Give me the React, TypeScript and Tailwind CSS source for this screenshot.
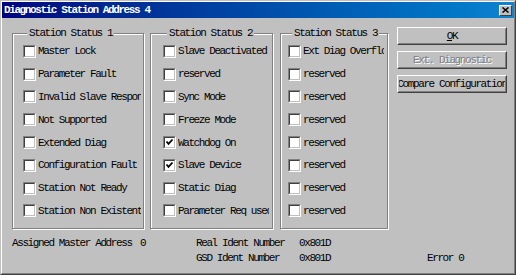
import React from 'react';

const font = "font-['Liberation_Mono',monospace] text-[11px] tracking-[-1.4px]";

const status1 = [
  'Master Lock',
  'Parameter Fault',
  'Invalid Slave Response',
  'Not Supported',
  'Extended Diag',
  'Configuration Fault',
  'Station Not Ready',
  'Station Non Existent',
];

const status2 = [
  'Slave Deactivated',
  'reserved',
  'Sync Mode',
  'Freeze Mode',
  'Watchdog On',
  'Slave Device',
  'Static Diag',
  'Parameter Req used',
];

const status3 = [
  'Ext Diag Overflow',
  'reserved',
  'reserved',
  'reserved',
  'reserved',
  'reserved',
  'reserved',
  'reserved',
];

const checked2 = ['Watchdog On', 'Slave Device'];

function CheckBox({ checked }: { checked?: boolean }) {
  return (
    <div className="w-[13px] h-[13px] shrink-0 border border-t-[#808080] border-l-[#808080] border-b-white border-r-white">
      <div className="w-full h-full bg-white border border-t-[#404040] border-l-[#404040] border-b-[#c0c0c0] border-r-[#c0c0c0]">
        {checked && (
          <svg width="9" height="9" viewBox="0 0 9 9" className="block">
            <path d="M1.5 3.5 L3.5 5.8 L7.5 1.5" stroke="#000" strokeWidth="1.8" fill="none" />
          </svg>
        )}
      </div>
    </div>
  );
}

function Group({
  title,
  items,
  checked = [],
  className,
}: {
  title: string;
  items: string[];
  checked?: string[];
  className: string;
}) {
  return (
    <fieldset
      className={`min-w-0 shrink-0 border border-[#808080] shadow-[inset_1px_1px_0_#fff,1px_1px_0_#fff] pb-[6px] ${className}`}
    >
      <legend className="ml-[4px] px-[2px] leading-[13px] bg-[#c0c0c0]">{title}</legend>
      <div className="flex flex-col">
        {items.map((label, i) => (
          <div key={i} className="flex items-center h-[22.8px]">
            <CheckBox checked={checked.includes(label)} />
            <span className="ml-[2px] flex-1 min-w-0 overflow-hidden whitespace-nowrap leading-[12px]">
              {label}
            </span>
          </div>
        ))}
      </div>
    </fieldset>
  );
}

function Button({ children, disabled }: { children: React.ReactNode; disabled?: boolean }) {
  return (
    <div className="w-[110px] h-[18px] border border-t-white border-l-white border-b-[#404040] border-r-[#404040]">
      <div
        className={`w-full h-full flex items-center justify-center overflow-hidden whitespace-nowrap border border-t-[#c0c0c0] border-l-[#c0c0c0] border-b-[#808080] border-r-[#808080] ${
          disabled ? 'text-[#808080] [text-shadow:1px_1px_0_#fff]' : 'text-black'
        }`}
      >
        {children}
      </div>
    </div>
  );
}

export default function App() {
  return (
    <div className={`w-[516px] h-[275px] bg-[#c0c0c0] text-black ${font}`}>
      <div className="w-full h-full border border-t-[#c0c0c0] border-l-[#c0c0c0] border-b-[#404040] border-r-[#404040]">
        <div className="w-full h-full flex flex-col border border-t-white border-l-white border-b-[#808080] border-r-[#808080]">
          {/* title bar */}
          <div className="h-[16px] flex items-center justify-between bg-gradient-to-r from-[#000080] to-[#1084d0] pl-[2px] pr-[2px]">
            <span className="text-white font-bold leading-[12px]">Diagnostic Station Address 4</span>
            <div className="w-[13px] h-[11px] border border-t-white border-l-white border-b-[#404040] border-r-[#404040] bg-[#c0c0c0] flex items-center justify-center">
              <svg width="7" height="6" viewBox="0 0 7 6" className="block">
                <path d="M0.5 0.5 L6.5 5.5 M6.5 0.5 L0.5 5.5" stroke="#000" strokeWidth="1.5" />
              </svg>
            </div>
          </div>

          {/* body */}
          <div className="flex flex-col pt-[9px] pl-[10px]">
            <div className="flex items-start">
              <Group title="Station Status 1" items={status1} className="w-[132px] pl-[10px] pr-[2px]" />
              <Group
                title="Station Status 2"
                items={status2}
                checked={checked2}
                className="w-[123px] ml-[6px] pl-[12px] pr-[3px]"
              />
              <Group title="Station Status 3" items={status3} className="w-[108px] ml-[7px] pl-[7px] pr-[3px]" />
              <div className="ml-[9px] flex flex-col gap-[6px] leading-[12px]">
                <Button>
                  <span className="underline underline-offset-1">O</span>K
                </Button>
                <Button disabled>Ext. Diagnostic</Button>
                <Button>Compare Configuration</Button>
              </div>
            </div>

            <div className="flex mt-[7px] leading-[15px]">
              <div className="w-[184px]">
                <span className="inline-block w-[128px]">Assigned Master Address</span>0
              </div>
              <div className="w-[103px] flex flex-col">
                <span>Real Ident Number</span>
                <span>GSD Ident Number</span>
              </div>
              <div className="w-[128px] flex flex-col">
                <span>0x801D</span>
                <span>0x801D</span>
              </div>
              <div className="flex flex-col">
                <span>&nbsp;</span>
                <span>Error 0</span>
              </div>
            </div>
          </div>
        </div>
      </div>
    </div>
  );
}
